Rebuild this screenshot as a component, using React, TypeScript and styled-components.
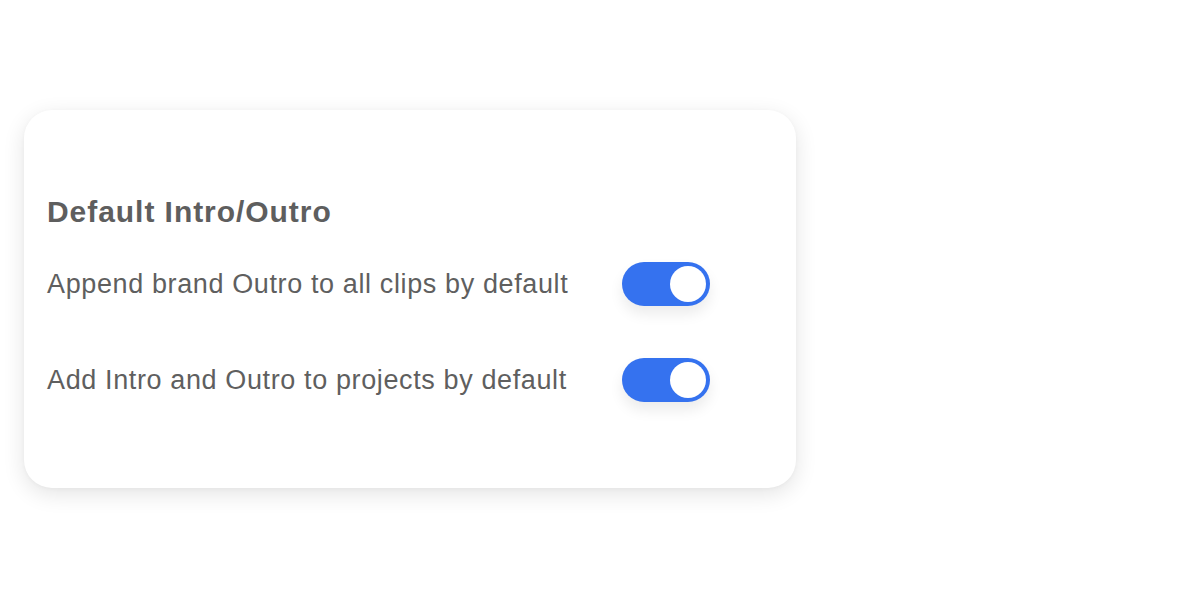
import React, { useState } from "react";
import styled, { createGlobalStyle } from "styled-components";

const Global = createGlobalStyle`
  html, body { margin: 0; padding: 0; background: #ffffff; }
  body { font-family: "Liberation Sans", Arial, sans-serif; }
`;

const Page = styled.div`
  width: 1200px;
  height: 600px;
  box-sizing: border-box;
  padding: 110px 0 0 24px;
`;

const Card = styled.section`
  width: 772px;
  height: 378px;
  box-sizing: border-box;
  background: #ffffff;
  border-radius: 28px;
  box-shadow: 0 6px 22px rgba(0, 0, 0, 0.11), 0 1px 4px rgba(0, 0, 0, 0.03);
  padding: 84px 0 0 23px;
  display: flex;
  flex-direction: column;
`;

const Title = styled.h2`
  margin: 0 0 32px 0;
  font-size: 30px;
  line-height: 36px;
  font-weight: 700;
  letter-spacing: 0.95px;
  color: #5e5e5e;
`;

const Row = styled.div`
  display: flex;
  align-items: center;
  width: 663px;
  justify-content: space-between;
  height: 44px;
  margin-bottom: 52px;
`;

const Label = styled.span`
  font-size: 27px;
  letter-spacing: 0.62px;
  color: #5f5f5f;
`;

const Track = styled.button<{ $on: boolean }>`
  width: 88px;
  height: 44px;
  border: none;
  padding: 0 4px;
  border-radius: 22px;
  background: ${(p) => (p.$on ? "#3572ef" : "#cfd3da")};
  display: flex;
  align-items: center;
  justify-content: ${(p) => (p.$on ? "flex-end" : "flex-start")};
  cursor: pointer;
  box-shadow: 0 8px 14px rgba(0, 0, 0, 0.08);
`;

const Knob = styled.span`
  width: 36px;
  height: 36px;
  border-radius: 50%;
  background: #ffffff;
`;

function Toggle({ on, onChange }: { on: boolean; onChange: () => void }) {
  return (
    <Track $on={on} onClick={onChange} aria-pressed={on}>
      <Knob />
    </Track>
  );
}

export default function App() {
  const [a, setA] = useState(true);
  const [b, setB] = useState(true);
  return (
    <>
      <Global />
      <Page>
        <Card>
          <Title>Default Intro/Outro</Title>
          <Row>
            <Label>Append brand Outro to all clips by default</Label>
            <Toggle on={a} onChange={() => setA(!a)} />
          </Row>
          <Row>
            <Label>Add Intro and Outro to projects by default</Label>
            <Toggle on={b} onChange={() => setB(!b)} />
          </Row>
        </Card>
      </Page>
    </>
  );
}
